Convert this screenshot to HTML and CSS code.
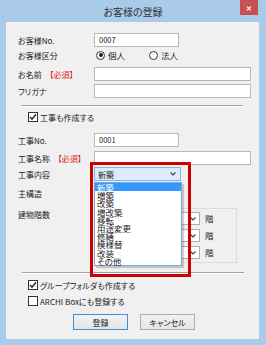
FILE: index.html
```html
<!DOCTYPE html>
<html lang="ja">
<head>
    <meta charset="UTF-8">
    <title>お客様の登録</title>
    <link rel="stylesheet" href="styles.css">
</head>
<body>
    <div class="window">
        <div class="titlebar">
            <span class="title">お客様の登録</span>
            <span class="close">&#x2715;</span>
        </div>

        <div class="panel">
            <div class="row r1">
                <span class="label">お客様No.</span>
                <div class="input short">0007</div>
            </div>
            <div class="row r2">
                <span class="label">お客様区分</span>
                <span class="radio on"></span><span class="opt">個人</span>
                <span class="radio second"></span><span class="opt">法人</span>
            </div>
            <div class="row r3">
                <span class="label">お名前 <span class="req">【必須】</span></span>
                <div class="input long"></div>
            </div>
            <div class="row r4">
                <span class="label">フリガナ</span>
                <div class="input long"></div>
            </div>

            <div class="sep sep1"></div>

            <div class="row check-row c0">
                <span class="check on"><svg width="8" height="8" viewBox="0 0 8 8"><path d="M1 4 L3 6.2 L7 1.2" fill="none" stroke="#222" stroke-width="1.4"/></svg></span>
                <span>工事も作成する</span>
            </div>

            <div class="row r5">
                <span class="label">工事No.</span>
                <div class="input short">0001</div>
            </div>
            <div class="row r6">
                <span class="label">工事名称 <span class="req">【必須】</span></span>
                <div class="input long"></div>
            </div>
            <div class="row r7">
                <span class="label">工事内容</span>
                <div class="combo open">
                    <span>新築</span>
                    <svg class="arrow" width="6" height="4" viewBox="0 0 6 4"><path d="M0.5 0.5 L3 3 L5.5 0.5" fill="none" stroke="#444" stroke-width="1.1"/></svg>
                </div>
            </div>
            <div class="row r8">
                <span class="label">主構造</span>
            </div>
            <div class="floors">
                <span class="label floors-label">建物階数</span>
                <div class="group">
                    <div class="floor-row">
                        <div class="combo small"><svg class="arrow" width="6" height="4" viewBox="0 0 6 4"><path d="M0.5 0.5 L3 3 L5.5 0.5" fill="none" stroke="#444" stroke-width="1.1"/></svg></div>
                        <span class="unit">階</span>
                    </div>
                    <div class="floor-row">
                        <div class="combo small"><svg class="arrow" width="6" height="4" viewBox="0 0 6 4"><path d="M0.5 0.5 L3 3 L5.5 0.5" fill="none" stroke="#444" stroke-width="1.1"/></svg></div>
                        <span class="unit">階</span>
                    </div>
                    <div class="floor-row">
                        <div class="combo small"><svg class="arrow" width="6" height="4" viewBox="0 0 6 4"><path d="M0.5 0.5 L3 3 L5.5 0.5" fill="none" stroke="#444" stroke-width="1.1"/></svg></div>
                        <span class="unit">階</span>
                    </div>
                </div>
            </div>

            <div class="sep sep2"></div>

            <div class="row check-row c1">
                <span class="check on"><svg width="8" height="8" viewBox="0 0 8 8"><path d="M1 4 L3 6.2 L7 1.2" fill="none" stroke="#222" stroke-width="1.4"/></svg></span>
                <span>グループフォルダも作成する</span>
            </div>
            <div class="row check-row c2">
                <span class="check"></span>
                <span>ARCHI Boxにも登録する</span>
            </div>

            <div class="buttons">
                <button class="btn default">登録</button>
                <button class="btn">キャンセル</button>
            </div>

            <!-- open dropdown of 工事内容 -->
            <ul class="dropdown">
                <li class="selected">新築</li>
                <li>増築</li>
                <li>改築</li>
                <li>増改築</li>
                <li>移転</li>
                <li>用途変更</li>
                <li>修繕</li>
                <li>模様替</li>
                <li>改装</li>
                <li>その他</li>
            </ul>
            <div class="highlight"></div>
        </div>
    </div>
</body>
</html>
```

FILE: styles.css
```css
* {
    margin: 0;
    padding: 0;
    box-sizing: border-box;
}

body {
    font-family: "Noto Sans CJK JP", sans-serif;
    font-feature-settings: "palt";
    font-size: 8px;
    color: #222;
    background: #fff;
}

.window {
    width: 266px;
    height: 345px;
    background: #a9cbe8;
    padding: 0 7px 6px 6px;
}

.titlebar {
    position: relative;
    height: 22px;
    display: flex;
    align-items: center;
    justify-content: center;
}

.titlebar .title {
    font-size: 10px;
    color: #333;
    margin-left: 1px;
}

.titlebar .close {
    position: absolute;
    top: 0;
    right: 1px;
    width: 18px;
    height: 15px;
    background: #c75050;
    color: #fff;
    font-size: 7px;
    font-weight: bold;
    display: flex;
    align-items: center;
    justify-content: center;
}

.panel {
    position: relative;
    height: 317px;
    background: #f0f0f0;
    padding: 11px 0 0 12px;
}

.row {
    display: flex;
    align-items: center;
    height: 14px;
}

.label {
    width: 76px;
    flex-shrink: 0;
}

.req {
    color: #e02020;
    margin-left: 6px;
}

.input {
    height: 14px;
    background: #fff;
    border: 1px solid #b8b8b8;
    font-size: 7.5px;
    padding-left: 4px;
    line-height: 12px;
}

.input.short {
    width: 85px;
}

.input.long {
    width: 157px;
}

.r2 { margin-top: 1px; }
.r3 { margin-top: 5px; }
.r4 { margin-top: 3px; }

.radio {
    width: 9px;
    height: 9px;
    border-radius: 50%;
    border: 1px solid #333;
    background: #fff;
    margin-left: 2px;
    position: relative;
}

.radio.on::after {
    content: "";
    position: absolute;
    left: 1.5px;
    top: 1.5px;
    width: 4px;
    height: 4px;
    border-radius: 50%;
    background: #222;
}

.radio.second {
    margin-left: 24px;
}

.opt {
    margin-left: 3px;
    font-size: 8.5px;
}

.sep {
    height: 2px;
    border-top: 1px solid #a0a0a0;
    border-bottom: 1px solid #fff;
}

.sep1 {
    margin: 7px 16px 0 3px;
}

.sep2 {
    margin: 9px 15px 0 4px;
}

.check-row {
    height: 12px;
    padding-left: 10px;
}

.check {
    width: 10px;
    height: 10px;
    border: 1px solid #333;
    background: #fff;
    margin-right: 2px;
    display: flex;
    align-items: center;
    justify-content: center;
}

.c0 { margin-top: 4px; }
.c1 { margin-top: 5px; }
.c2 { margin-top: 4px; }

.r5 { margin-top: 10px; }
.r6 { margin-top: 4px; }
.r7 { margin-top: 2px; }
.r8 { margin-top: 5px; }

.combo {
    position: relative;
    height: 14px;
    background: #fff;
    border: 1px solid #acacac;
    display: flex;
    align-items: center;
    padding-left: 3px;
}

.combo.open {
    width: 87px;
    background: #dcecfc;
    border-color: #7eb4ea;
}

.combo .arrow {
    position: absolute;
    right: 4px;
    top: 4px;
}

.floors {
    display: flex;
    margin-top: 8px;
}

.floors-label {
    margin-top: 1px;
    height: 12px;
}

.group {
    width: 143px;
    height: 55px;
    border: 1px solid #dcdcdc;
    padding-top: 2px;
    display: flex;
    flex-direction: column;
    gap: 3px;
}

.floor-row {
    display: flex;
    align-items: center;
    height: 14px;
}

.combo.small {
    width: 50px;
    height: 13px;
    margin-left: 55px;
}

.combo.small .arrow {
    right: 3px;
    top: 4px;
}

.unit {
    margin-left: 5px;
    font-size: 8.5px;
}

.buttons {
    display: flex;
    gap: 12px;
    margin-top: 7px;
    padding-left: 55px;
}

.btn {
    width: 55px;
    height: 16px;
    font-family: inherit;
    font-feature-settings: "palt";
    font-size: 8px;
    color: #222;
    background: linear-gradient(#f2f2f2, #e5e5e5);
    border: 1px solid #acacac;
}

.btn.default {
    border-color: #3c8fd8;
}

.dropdown {
    position: absolute;
    left: 88px;
    top: 160px;
    width: 88px;
    height: 84px;
    list-style: none;
    background: #fff;
    border: 1px solid #7ea5cf;
    box-shadow: 2px 2px 1px rgba(0, 0, 0, 0.18);
    font-size: 8.5px;
}

.dropdown li {
    height: 8.2px;
    line-height: 8.2px;
    padding-left: 2px;
}

.dropdown li.selected {
    background: #3399ff;
    color: #fff;
}

.highlight {
    position: absolute;
    left: 84px;
    top: 140px;
    width: 101px;
    height: 115px;
    border: 3px solid #cc0000;
}
```
